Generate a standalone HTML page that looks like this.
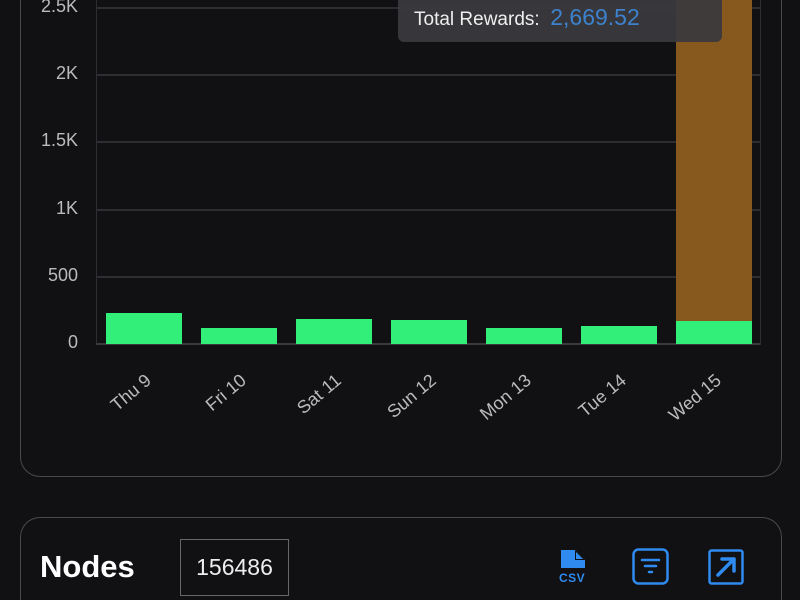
<!DOCTYPE html>
<html style="overflow:hidden;height:600px"><head><style>
body{margin:0;width:800px;height:600px;background:#111013;overflow:hidden;position:relative;font-family:"Liberation Sans",sans-serif;color:#ddd}
.card{position:absolute;left:20px;width:760px;border:1px solid #4a494d;border-radius:20px}
.grid{position:absolute;left:96px;width:664px;height:2px;background:#2e2d31}
.yl{position:absolute;right:722px;font-size:18px;color:#bbb;text-align:right}
.bar{position:absolute;background:#31ef78;width:76px}
.xl{position:absolute;font-size:18px;color:#bbb;transform:rotate(-40deg);transform-origin:right top;text-align:right;width:90px}
</style></head><body>
<div class="card" style="top:-40px;height:515px"></div>
<div style="position:absolute;left:96px;top:0;width:1px;height:345px;background:#2e2d31"></div>
<div style="position:absolute;left:760px;top:0;width:1px;height:345px;background:#2e2d31"></div>
<div class="grid" style="top:7px"></div>
<div class="grid" style="top:74px"></div>
<div class="grid" style="top:141px"></div>
<div class="grid" style="top:209px"></div>
<div class="grid" style="top:276px"></div>
<div class="grid" style="top:343px;background:#3a393d"></div>
<div class="yl" style="top:-4px">2.5K</div>
<div class="yl" style="top:63px">2K</div>
<div class="yl" style="top:130px">1.5K</div>
<div class="yl" style="top:198px">1K</div>
<div class="yl" style="top:265px">500</div>
<div class="yl" style="top:332px">0</div>
<div style="position:absolute;left:676px;top:0;width:76px;height:344px;background:#87591e"></div>
<div class="bar" style="left:106px;top:313px;height:31px"></div>
<div class="bar" style="left:201px;top:328px;height:16px"></div>
<div class="bar" style="left:296px;top:319px;height:25px"></div>
<div class="bar" style="left:391px;top:320px;height:24px"></div>
<div class="bar" style="left:486px;top:328px;height:16px"></div>
<div class="bar" style="left:581px;top:326px;height:18px"></div>
<div class="bar" style="left:676px;top:321px;height:23px"></div>
<div class="xl" style="left:52px;top:370px">Thu 9</div>
<div class="xl" style="left:147px;top:370px">Fri 10</div>
<div class="xl" style="left:242px;top:370px">Sat 11</div>
<div class="xl" style="left:337px;top:370px">Sun 12</div>
<div class="xl" style="left:432px;top:370px">Mon 13</div>
<div class="xl" style="left:527px;top:370px">Tue 14</div>
<div class="xl" style="left:622px;top:370px">Wed 15</div>
<div style="position:absolute;left:398px;top:-10px;width:324px;height:52px;background:rgba(58,57,61,0.93);border-radius:6px"></div>
<div style="position:absolute;left:414px;top:4px;font-size:19px;color:#eee">Total Rewards:&nbsp; <span style="color:#3d82cc;font-size:23px">2,669.52</span></div>
<div class="card" style="top:517px;height:100px;border-bottom:none;border-radius:20px 20px 0 0"></div>
<div style="position:absolute;left:40px;top:549px;font-size:31px;font-weight:bold;color:#fff">Nodes</div>
<div style="position:absolute;left:180px;top:539px;width:109px;height:57px;border:1px solid #666;box-sizing:border-box;font-size:23px;color:#eee;line-height:55px;text-align:center">156486</div>
<svg style="position:absolute;left:556px;top:549px" width="36" height="36"><path d="M5 1h14l10 10v8H5z" fill="#2f8bef"/><path d="M19 1l10 10h-10z" fill="#111013"/><path d="M20 3l7 7h-7z" fill="#2f8bef"/><text x="3" y="33" font-size="12" font-weight="bold" fill="#2f8bef" font-family="Liberation Sans" letter-spacing="0.5">CSV</text></svg>
<svg style="position:absolute;left:632px;top:548px" width="38" height="38"><rect x="1.5" y="1.5" width="34" height="34" rx="5" fill="none" stroke="#2f8bef" stroke-width="2.5"/><path d="M10 12h17M13 18h11M17 24h3" stroke="#2f8bef" stroke-width="2.5" stroke-linecap="round"/></svg>
<svg style="position:absolute;left:708px;top:549px" width="36" height="36"><rect x="1.5" y="1.5" width="33" height="33" rx="2" fill="none" stroke="#2f8bef" stroke-width="2.5"/><path d="M10 26L26 10M14 10h12v12" fill="none" stroke="#2f8bef" stroke-width="3.5" stroke-linecap="round" stroke-linejoin="round"/></svg>
</body></html>
